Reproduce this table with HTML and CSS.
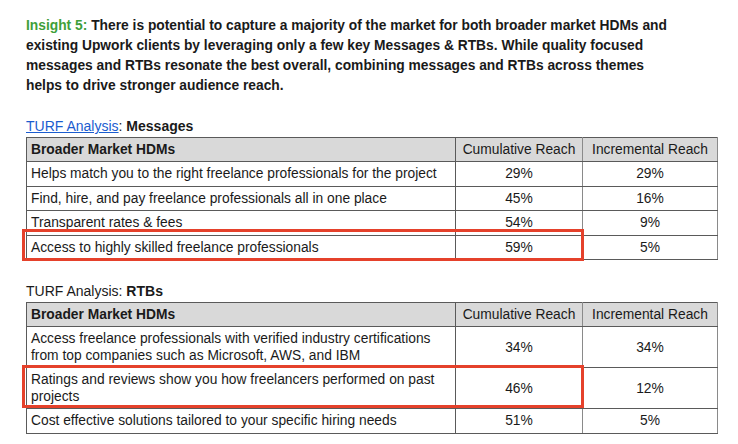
FILE: index.html
```html
<!DOCTYPE html>
<html>
<head>
<meta charset="utf-8">
<link rel="stylesheet" href="styles.css">
</head>
<body>
<div class="page">
  <p class="insight"><span class="green">Insight 5:</span> There is potential to capture a majority of the market for both broader market HDMs and existing Upwork clients by leveraging only a few key Messages &amp; RTBs. While quality focused messages and RTBs resonate the best overall, combining messages and RTBs across themes helps to drive stronger audience reach.</p>

  <div class="title t1"><a class="link" href="#">TURF Analysis</a>: <b>Messages</b></div>
  <div class="wrap">
    <table class="turf">
      <colgroup><col class="c1"><col class="c2"><col class="c3"></colgroup>
      <tr class="head"><th>Broader Market HDMs</th><td>Cumulative Reach</td><td>Incremental Reach</td></tr>
      <tr class="r"><th>Helps match you to the right freelance professionals for the project</th><td>29%</td><td>29%</td></tr>
      <tr class="r"><th>Find, hire, and pay freelance professionals all in one place</th><td>45%</td><td>16%</td></tr>
      <tr class="r"><th>Transparent rates &amp; fees</th><td>54%</td><td>9%</td></tr>
      <tr class="r"><th>Access to highly skilled freelance professionals</th><td>59%</td><td>5%</td></tr>
    </table>
    <div class="hl hl1"></div>
  </div>

  <div class="title t2">TURF Analysis: <b>RTBs</b></div>
  <div class="wrap">
    <table class="turf">
      <colgroup><col class="c1"><col class="c2"><col class="c3"></colgroup>
      <tr class="head"><th>Broader Market HDMs</th><td>Cumulative Reach</td><td>Incremental Reach</td></tr>
      <tr class="r2"><th>Access freelance professionals with verified industry certifications from top companies such as Microsoft, AWS, and IBM</th><td>34%</td><td>34%</td></tr>
      <tr class="r2"><th>Ratings and reviews show you how freelancers performed on past projects</th><td>46%</td><td>12%</td></tr>
      <tr class="r last"><th>Cost effective solutions tailored to your specific hiring needs</th><td>51%</td><td>5%</td></tr>
    </table>
    <div class="hl hl2"></div>
  </div>
</div>
</body>
</html>
```
FILE: styles.css
```css
html, body {
  margin: 0;
  padding: 0;
  background: #ffffff;
}
.page {
  padding: 16px 0 0 26px;
  font-family: "Liberation Sans", Arial, sans-serif;
  color: #1a1a1a;
}
.insight {
  margin: 0;
  width: 650px;
  font-size: 13.8px;
  line-height: 20px;
  font-weight: bold;
}
.green { color: #3f9f3a; }
.title {
  font-size: 14px;
  line-height: 20px;
  height: 21px;
}
.t1 { margin-top: 20px; }
.t2 { margin-top: 21px; }
.link {
  color: #1a5ccf;
  text-decoration: underline;
}
.wrap { position: relative; }
.turf {
  border-collapse: collapse;
  width: 691px;
  table-layout: fixed;
  font-size: 13.8px;
}
.c1 { width: 429px; }
.c2 { width: 127px; }
.c3 { width: 135px; }
.turf th, .turf td {
  border: 1px solid #5a5a5a;
  padding: 0 4px;
  line-height: 17px;
}
.turf th {
  text-align: left;
  font-weight: normal;
}
.turf td { text-align: center; }
.turf td { border-left-color: #8a8a8a; border-right-color: #8a8a8a; }
.head th, .head td {
  background: #d9d9d9;
  height: 23px;
}
.head th { font-weight: bold; }
.r th, .r td { height: 23.5px; }
.r2 th, .r2 td { height: 40px; }
.hl {
  position: absolute;
  border: 3px solid #e5412b;
  left: -4px;
  width: 556px;
}
.hl1 { top: 92px; height: 26px; }
.hl2 { top: 63px; height: 37px; }
```
